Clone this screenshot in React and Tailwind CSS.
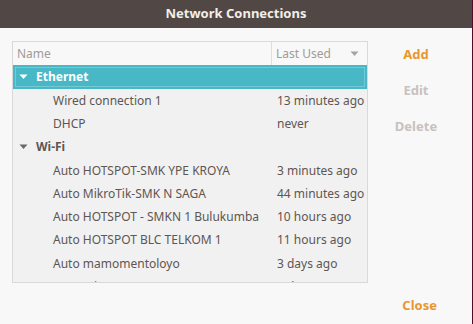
const ethernet = [
  { name: 'Wired connection 1', used: '13 minutes ago' },
  { name: 'DHCP', used: 'never' },
];

const wifi = [
  { name: 'Auto HOTSPOT-SMK YPE KROYA', used: '3 minutes ago' },
  { name: 'Auto MikroTik-SMK N SAGA', used: '44 minutes ago' },
  { name: 'Auto HOTSPOT - SMKN 1 Bulukumba', used: '10 hours ago' },
  { name: 'Auto HOTSPOT BLC TELKOM 1', used: '11 hours ago' },
  { name: 'Auto mamomentoloyo', used: '3 days ago' },
  { name: 'Auto minternet', used: '7 days ago' },
];

function Arrow({ color }) {
  return (
    <svg width="9" height="6" viewBox="0 0 9 6" className="shrink-0">
      <path d="M0.5 0.5 L8.5 0.5 L4.5 5 Z" fill={color} />
    </svg>
  );
}

function Row({ item }) {
  return (
    <div className="flex h-[23.3px] items-center shrink-0 text-[#5e5651]">
      <div className="w-[264px] shrink-0 pl-[40px] whitespace-nowrap">{item.name}</div>
      <div className="shrink-0 whitespace-nowrap">{item.used}</div>
    </div>
  );
}

export default function App() {
  return (
    <div
      className="flex w-[473px] h-[324px] overflow-hidden text-[13px]"
      style={{ fontFamily: '"Noto Sans", "Open Sans", sans-serif' }}
    >
      <div className="flex flex-col flex-1 bg-[#f8f8f8]">
        {/* title bar */}
        <div className="h-[28px] shrink-0 bg-[#514845] flex items-center justify-center text-[#f2eeea] font-bold">
          Network Connections
        </div>

        <div className="flex">
          {/* connection tree */}
          <div className="ml-[12px] mt-[13px] w-[356px] h-[242px] shrink-0 border border-[#d9d9d9] bg-[#f1f1f1] overflow-hidden flex flex-col text-[12px]">
            <div className="h-[23px] shrink-0 flex bg-[#f8f8f8] text-[#a19b97]">
              <div className="w-[259px] shrink-0 border-r border-[#dedede] pl-[4px] flex items-center">Name</div>
              <div className="flex-1 pl-[4px] pr-[8px] flex items-center justify-between">
                <span>Last Used</span>
                <Arrow color="#a8a29e" />
              </div>
            </div>

            <div className="h-[24px] shrink-0 bg-[#48b8c6] p-[2px]">
              <div className="h-full border border-[#74cad4] flex items-center pl-[3px] gap-[8px] text-white font-bold">
                <Arrow color="#ffffff" />
                <span>Ethernet</span>
              </div>
            </div>
            {ethernet.map((item) => (
              <Row key={item.name} item={item} />
            ))}

            <div className="h-[23.3px] shrink-0 flex items-center pl-[6px] gap-[8px] text-[#5e5651] font-bold">
              <Arrow color="#6e6661" />
              <span>Wi-Fi</span>
            </div>
            {wifi.map((item) => (
              <Row key={item.name} item={item} />
            ))}
          </div>

          {/* action buttons */}
          <div className="w-[96px] pt-[9px] flex flex-col items-center font-bold">
            <div className="h-[36px] flex items-center text-[#e8972e]">Add</div>
            <div className="h-[36px] flex items-center text-[#c6c2bf]">Edit</div>
            <div className="h-[36px] flex items-center text-[#c6c2bf]">Delete</div>
          </div>
        </div>

        <div className="mt-[5px] h-[36px] flex items-center justify-end pr-[35px] font-bold text-[#e8972e]">
          Close
        </div>
      </div>
      <div className="w-px bg-[#4e0d29]" />
    </div>
  );
}
